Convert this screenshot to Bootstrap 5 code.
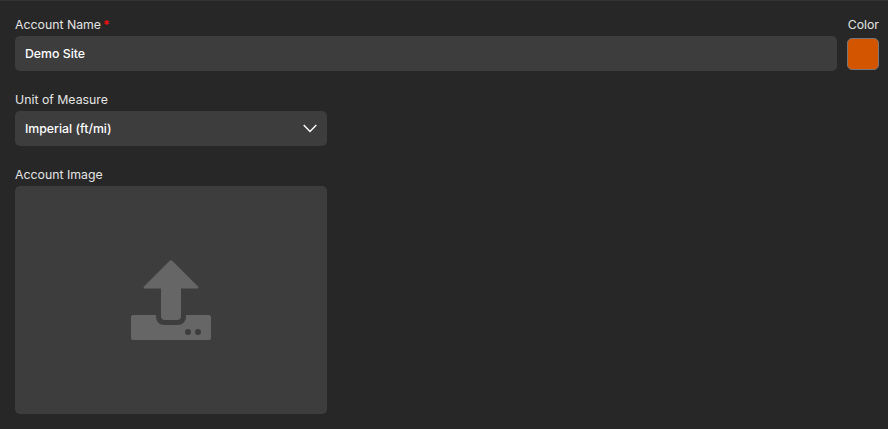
<!doctype html>
<html><head><meta charset="utf-8">
<link href="https://cdn.jsdelivr.net/npm/bootstrap@5.3.0/dist/css/bootstrap.min.css" rel="stylesheet">
<style>
html,body{height:100%;margin:0;overflow:hidden}
body{background:#272727;color:#e6e6e6;font-family:Inter,"Liberation Sans",sans-serif;font-size:13px}
.sheet{padding:15px 9px 0 15px;border-top:1px solid #333;height:429px}
.lbl{font-size:12.3px;line-height:18px;margin-bottom:2px;color:#e4e4e4;white-space:nowrap}
.star{color:#f01010;font-weight:700;margin-left:2px}
.fld{background:#3d3d3d;border-radius:5px;height:35px;padding:0 10px;color:#fff;font-weight:500;font-size:12.3px}
.valtext{padding-top:2px}
.swatch{width:32px;height:32px;background:#d45500;border:1px solid #777;border-radius:5px;margin-top:2px;margin-left:auto}
.narrow{width:312px}
.drop{background:#3d3d3d;border-radius:5px;width:312px;height:228px}
.gapb{margin-bottom:20px}
.colorcol{width:34px}
</style></head><body>
<div class="sheet">
<div class="d-flex gap-2 gapb">
<div class="flex-grow-1"><div class="lbl">Account Name<span class="star">*</span></div><div class="fld d-flex align-items-center"><span class="valtext">Demo Site</span></div></div>
<div class="colorcol d-flex flex-column align-items-end"><div class="lbl">Color</div><div class="swatch"></div></div>
</div>
<div class="narrow gapb"><div class="lbl">Unit of Measure</div><div class="fld d-flex align-items-center justify-content-between"><span class="valtext">Imperial (ft/mi)</span><svg width="14" height="9" viewBox="0 0 14 9" fill="none" stroke="#fff" stroke-width="1.4"><path d="M.7 1 7 7.5 13.3 1"/></svg></div></div>
<div><div class="lbl">Account Image</div><div class="drop d-flex align-items-center justify-content-center"><svg width="80" height="80" viewBox="0 0 80 80" fill="#666"><path d="M38.5 1a2 2 0 0 1 3 0L66.500 26a1.200 1.200 0 0 1-1 2.500H50V56a4 4 0 0 1-4 4H34a4 4 0 0 1-4-4V28.500H14.500a1.200 1.200 0 0 1-1-2.500z"/><path d="M2 55H25V57a8 8 0 0 0 8 8H47a8 8 0 0 0 8-8V55H78a2 2 0 0 1 2 2V78a2 2 0 0 1-2 2H2a2 2 0 0 1-2-2V57a2 2 0 0 1 2-2z"/><circle cx="57" cy="72" r="3" fill="#3d3d3d"/><circle cx="67" cy="72" r="3" fill="#3d3d3d"/></svg></div></div>
</div>
</body></html>
